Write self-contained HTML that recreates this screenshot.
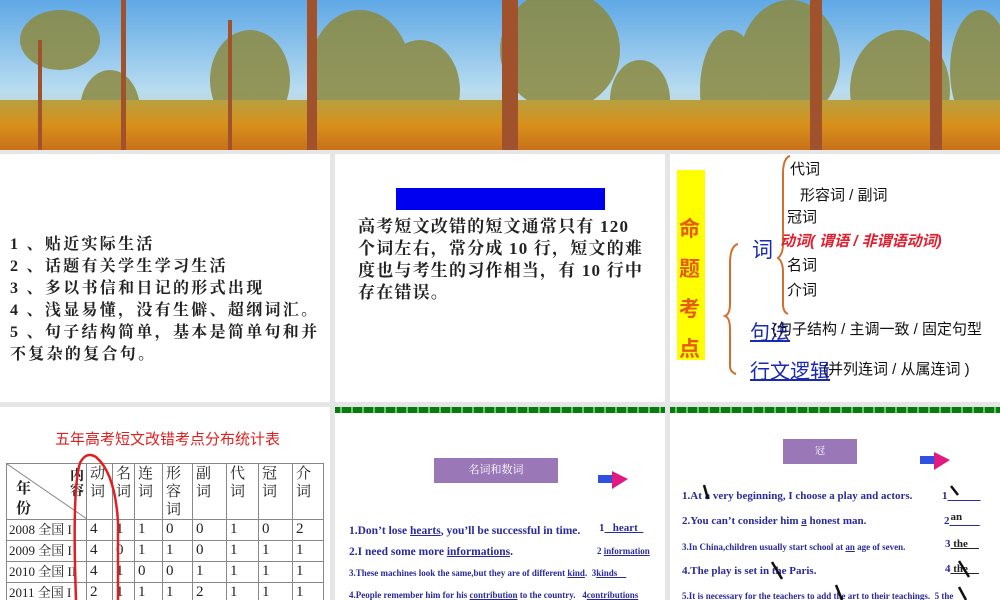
<!DOCTYPE html>
<html><head><meta charset="utf-8"><style>
*{margin:0;padding:0;box-sizing:border-box}
body{width:1000px;height:600px;overflow:hidden;background:#e6e6e6;position:relative;font-family:"Liberation Serif","Noto Serif CJK SC",serif}
.p{position:absolute;background:#fff;overflow:hidden}
.a{position:absolute;white-space:nowrap}
.cn{font-family:"Liberation Sans","Noto Sans CJK SC",sans-serif}
.sr{font-family:"Liberation Serif","Noto Serif CJK SC",serif}
.en{font-family:"Liberation Serif",serif;font-weight:bold;color:#2a2a9a}
.green{position:absolute;left:0;top:0;width:330px;height:6px;background:repeating-linear-gradient(90deg,#0a7a10 0 5px,#6c6 5px 7px,#0a7a10 7px 11px)}
table{border-collapse:collapse;position:absolute;left:6px;top:56px;font-size:15px;font-family:"Liberation Serif","Noto Serif CJK SC",serif;color:#222;table-layout:fixed}
td{border:1px solid #888;vertical-align:top;padding:0 3px;line-height:19px;height:21px;overflow:hidden}
tr.h td{height:55px;line-height:18px;padding-top:1px}
</style></head><body>
<svg class="a" style="left:0;top:0" width="1000" height="150">
<defs><linearGradient id="sky" x1="0" y1="0" x2="0" y2="1"><stop offset="0" stop-color="#5fa8e6"/><stop offset="0.6" stop-color="#b8dcf0"/><stop offset="1" stop-color="#d8c890"/></linearGradient>
<linearGradient id="gr" x1="0" y1="0" x2="0" y2="1"><stop offset="0" stop-color="#b7a040"/><stop offset="0.5" stop-color="#d8901a"/><stop offset="1" stop-color="#c8701a"/></linearGradient></defs>
<rect width="1000" height="150" fill="url(#sky)"/>
<g fill="#8c8a40" opacity="0.85">
<ellipse cx="60" cy="40" rx="40" ry="30"/><ellipse cx="110" cy="110" rx="30" ry="40"/><ellipse cx="250" cy="80" rx="40" ry="50"/><ellipse cx="360" cy="70" rx="50" ry="60"/><ellipse cx="420" cy="90" rx="40" ry="50"/><ellipse cx="560" cy="50" rx="60" ry="60"/><ellipse cx="640" cy="100" rx="30" ry="40"/><ellipse cx="730" cy="90" rx="30" ry="60"/><ellipse cx="790" cy="60" rx="50" ry="60"/><ellipse cx="900" cy="90" rx="50" ry="60"/><ellipse cx="980" cy="70" rx="30" ry="60"/>
</g>
<rect y="100" width="1000" height="50" fill="url(#gr)"/>
<g fill="#a0522d"><rect x="307" y="0" width="10" height="150"/><rect x="502" y="0" width="16" height="150"/><rect x="810" y="0" width="12" height="150"/><rect x="930" y="0" width="12" height="150"/><rect x="121" y="0" width="5" height="150"/><rect x="228" y="20" width="4" height="130"/><rect x="38" y="40" width="4" height="110"/></g>
</svg>

<div class="p" style="left:0;top:154px;width:330px;height:248px">
<div class="a sr" style="left:10px;top:80px;font-size:16px;letter-spacing:2.3px;font-weight:bold;line-height:22px;color:#222">1 、贴近实际生活<br>2 、话题有关学生学习生活<br>3 、多以书信和日记的形式出现<br>4 、浅显易懂，没有生僻、超纲词汇。<br>5 、句子结构简单，基本是简单句和并<br>不复杂的复合句。</div>
</div>

<div class="p" style="left:335px;top:154px;width:330px;height:248px">
<div class="a" style="left:61px;top:34px;width:209px;height:22px;background:#0000f0"></div>
<div class="a sr" style="left:23px;top:62px;font-size:17px;letter-spacing:1.2px;font-weight:bold;line-height:22px;color:#222">高考短文改错的短文通常只有 120<br>个词左右，常分成 10 行，短文的难<br>度也与考生的习作相当，有 10 行中<br>存在错误。</div>
</div>

<div class="p" style="left:670px;top:154px;width:330px;height:248px">
<div class="a" style="left:7px;top:16px;width:28px;height:190px;background:#ffff00"></div>
<div class="a cn" style="left:9px;top:56px;font-size:21px;font-weight:bold;line-height:40px;color:#e85a10;white-space:normal;width:24px">命题考点</div>
<svg class="a" style="left:0;top:0" width="330" height="248" fill="none" stroke="#d07030" stroke-width="2">
<path d="M68 90 Q60 92 60 110 L60 150 Q60 160 55 162 Q60 164 60 175 L60 212 Q60 218 66 220"/>
<path d="M120 2 Q113 4 113 20 L113 90 Q113 100 108 104 Q113 108 113 118 L113 150 Q113 158 118 160"/>
</svg>
<div class="a cn" style="left:82px;top:80px;font-size:21px;color:#1a2ab0">词</div>
<div class="a cn" style="left:120px;top:4px;font-size:15px;color:#111">代词</div>
<div class="a cn" style="left:130px;top:30px;font-size:15px;color:#111">形容词 / 副词</div>
<div class="a cn" style="left:117px;top:52px;font-size:15px;color:#111">冠词</div>
<div class="a cn" style="left:110px;top:76px;font-size:15px;color:#e02030;font-style:italic;font-weight:bold">动词( 谓语 / 非谓语动词)</div>
<div class="a cn" style="left:117px;top:100px;font-size:15px;color:#111">名词</div>
<div class="a cn" style="left:117px;top:125px;font-size:15px;color:#111">介词</div>
<div class="a cn" style="left:80px;top:162px;font-size:20px;color:#1a2ab0;text-decoration:underline">句法</div>
<div class="a cn" style="left:102px;top:164px;font-size:15px;color:#111">(句子结构 / 主调一致 / 固定句型</div>
<div class="a cn" style="left:80px;top:201px;font-size:20px;color:#1a2ab0;text-decoration:underline">行文逻辑</div>
<div class="a cn" style="left:153px;top:204px;font-size:15px;color:#111">(并列连词 / 从属连词 )</div>
</div>

<div class="p" style="left:0;top:407px;width:330px;height:193px">
<div class="a cn" style="left:55px;top:21px;font-size:15px;color:#e02020">五年高考短文改错考点分布统计表</div>
<table>
<colgroup><col style="width:80px"><col style="width:26px"><col style="width:22px"><col style="width:28px"><col style="width:30px"><col style="width:34px"><col style="width:32px"><col style="width:34px"><col style="width:31px"></colgroup>
<tr class="h"><td style="position:relative;padding:0"><svg style="position:absolute;left:0;top:0" width="80" height="55"><line x1="0" y1="0" x2="80" y2="55" stroke="#888"/></svg><span style="position:absolute;left:9px;top:15px;font-weight:bold;line-height:20px">年<br>份</span><span style="position:absolute;right:2px;top:5px;font-weight:bold;line-height:15px;font-size:14px">内<br>容</span></td>
<td>动词</td><td>名词</td><td>连词</td><td>形容词</td><td>副词</td><td>代词</td><td>冠词</td><td>介词</td></tr>
<tr><td style="font-size:13px;padding:0 2px">2008 全国 I</td><td>4</td><td>1</td><td>1</td><td>0</td><td>0</td><td>1</td><td>0</td><td>2</td></tr>
<tr><td style="font-size:13px;padding:0 2px">2009 全国 I</td><td>4</td><td>0</td><td>1</td><td>1</td><td>0</td><td>1</td><td>1</td><td>1</td></tr>
<tr><td style="font-size:13px;padding:0 2px">2010 全国 II</td><td>4</td><td>1</td><td>0</td><td>0</td><td>1</td><td>1</td><td>1</td><td>1</td></tr>
<tr><td style="font-size:13px;padding:0 2px">2011 全国 I</td><td>2</td><td>1</td><td>1</td><td>1</td><td>2</td><td>1</td><td>1</td><td>1</td></tr>
</table>
<svg class="a" style="left:0;top:0" width="330" height="193"><path d="M76 193 Q72 80 80 56 Q86 44 96 50 Q115 66 118 115 L118 193" fill="none" stroke="#e02020" stroke-width="2.5"/></svg>
</div>

<div class="p" style="left:335px;top:407px;width:330px;height:193px">
<div class="green"></div>
<div class="a" style="left:99px;top:51px;width:124px;height:25px;background:#9a78b8;color:#fff;font-size:11px;text-align:center;line-height:25px">名词和数词</div>
<svg class="a" style="left:263px;top:62px" width="32" height="22"><rect x="0" y="6" width="16" height="8" fill="#3050e0"/><path d="M14 2 L30 10 L14 20 Z" fill="#e01a80"/></svg>
<div class="a en" style="left:14px;top:118px;font-size:11.5px">1.Don’t lose <u>hearts</u>, you’ll be successful in time.</div>
<div class="a en" style="left:264px;top:115px;font-size:11px">1<u>&nbsp;&nbsp;&nbsp;heart&nbsp;&nbsp;</u></div>
<div class="a en" style="left:14px;top:139px;font-size:11.5px">2.I need some more <u>informations</u>.</div>
<div class="a en" style="left:262px;top:139px;font-size:9px">2 <u>information</u></div>
<div class="a en" style="left:14px;top:161px;font-size:9px">3.These machines look the same,but they are of different <u>kind</u>.&nbsp;&nbsp;3<u>kinds&nbsp;&nbsp;&nbsp;&nbsp;</u></div>
<div class="a en" style="left:14px;top:183px;font-size:9px">4.People remember him for his <u>contribution</u> to the country.&nbsp;&nbsp;&nbsp;4<u>contributions</u></div>
</div>

<div class="p" style="left:670px;top:407px;width:330px;height:193px">
<div class="green"></div>
<div class="a" style="left:113px;top:32px;width:74px;height:25px;background:#9a78b8;color:#fff;font-size:10px;text-align:center;line-height:25px">冠</div>
<svg class="a" style="left:250px;top:43px" width="32" height="22"><rect x="0" y="6" width="16" height="8" fill="#3050e0"/><path d="M14 2 L30 10 L14 20 Z" fill="#e01a80"/></svg>
<div class="a en" style="left:12px;top:83px;font-size:11px">1.At a very beginning, I choose a play and actors.</div>
<div class="a en" style="left:272px;top:83px;font-size:11px">1<u>&nbsp;&nbsp;&nbsp;&nbsp;&nbsp;&nbsp;&nbsp;&nbsp;&nbsp;&nbsp;&nbsp;&nbsp;</u></div>
<div class="a en" style="left:12px;top:108px;font-size:11px">2.You can’t consider him <u>a</u> honest man.</div>
<div class="a en" style="left:275px;top:104px;font-size:11px;color:#222">&nbsp;&nbsp;an</div>
<div class="a en" style="left:274px;top:108px;font-size:11px">2<u>&nbsp;&nbsp;&nbsp;&nbsp;&nbsp;&nbsp;&nbsp;&nbsp;&nbsp;&nbsp;&nbsp;</u></div>
<div class="a en" style="left:12px;top:135px;font-size:9px">3.In China,children usually start school at <u>an</u> age of seven.</div>
<div class="a en" style="left:275px;top:131px;font-size:11px">3<u style="color:#222">&nbsp;the&nbsp;&nbsp;&nbsp;&nbsp;</u></div>
<div class="a en" style="left:12px;top:158px;font-size:11px">4.The play is set in the Paris.</div>
<div class="a en" style="left:275px;top:156px;font-size:11px">4<u style="color:#222">&nbsp;the&nbsp;&nbsp;&nbsp;&nbsp;</u></div>
<div class="a en" style="left:12px;top:184px;font-size:9px">5.It is necessary for the teachers to add the art to their teachings.&nbsp;&nbsp;5&nbsp;the</div>
<svg class="a" style="left:0;top:0" width="330" height="193" stroke="#111" stroke-width="2.5"><line x1="34" y1="78" x2="38" y2="92"/><line x1="281" y1="79" x2="288" y2="88"/><line x1="102" y1="155" x2="112" y2="172"/><line x1="289" y1="154" x2="299" y2="170"/><line x1="166" y1="178" x2="172" y2="193"/><line x1="289" y1="180" x2="296" y2="193"/></svg>
</div>
</body></html>
